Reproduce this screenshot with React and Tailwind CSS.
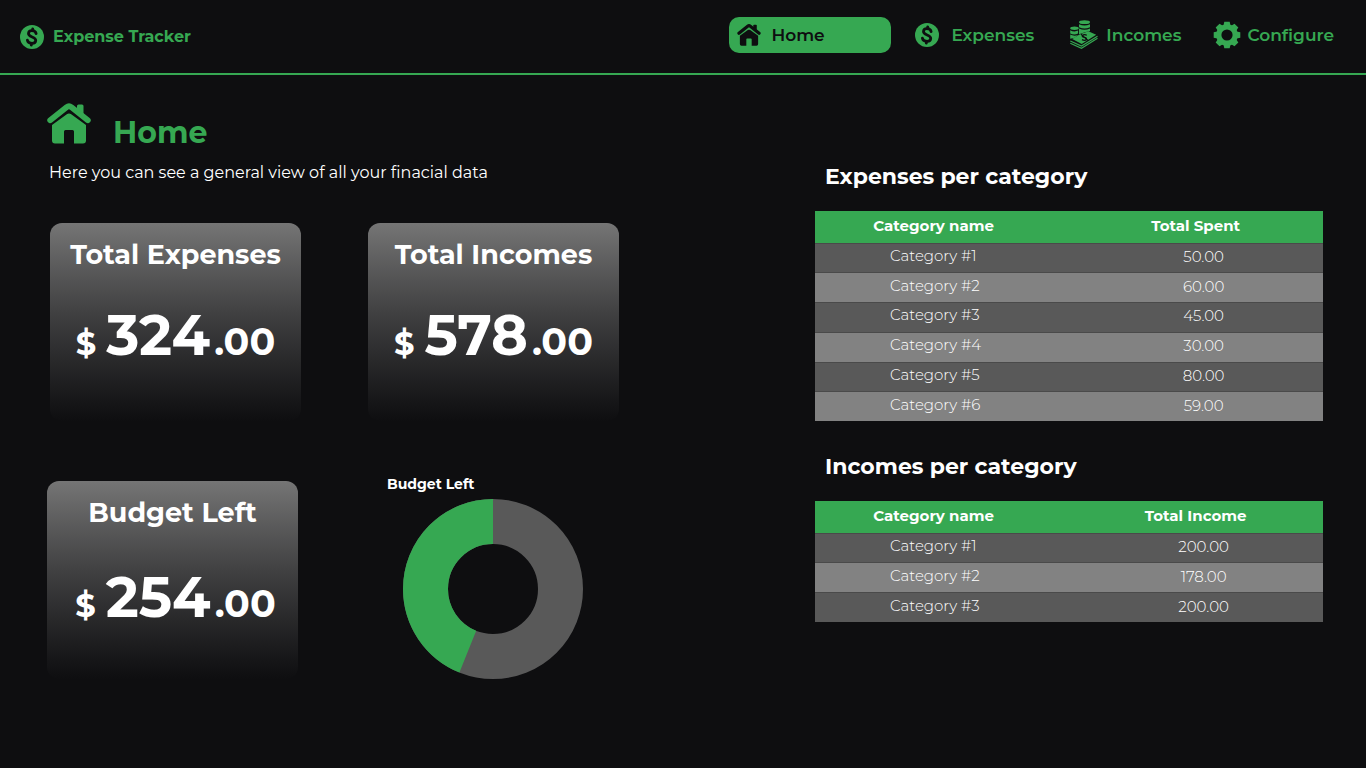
const GREEN = '#36a852';

function DollarIcon({ className }) {
  return (
    <svg viewBox="0 0 24 24" className={className} aria-hidden="true">
      <circle cx="12" cy="12" r="12" fill="currentColor" />
      <g transform="rotate(5 12 12)" fill="none" stroke="#0e0e10" strokeWidth="2.8" strokeLinecap="round" strokeLinejoin="round">
        <path d="M15.800 8.200C15.200 6.500 13.900 5.700 12 5.700c-2.200 0-3.800 1.200-3.800 3 0 4.300 7.800 2.200 7.800 6.500 0 2-1.700 3.100-4 3.100-2.200 0-3.800-1-4.300-2.700" />
        <path d="M12 3.800v1.900M12 18.300v1.900" />
      </g>
    </svg>
  );
}

function HomeIcon({ className }) {
  return (
    <svg viewBox="0 0 44 41" className={className} fill="currentColor" aria-hidden="true">
      <path d="M30 6.300V3Q30 1.500 31.500 1.500H35Q36.500 1.500 36.500 3v8z" />
      <path d="M3.200 17.300 19.500 4.200Q22 2.200 24.500 4.200L40.800 17.300" fill="none" stroke="currentColor" strokeWidth="5.800" strokeLinecap="round" strokeLinejoin="round" />
      <path d="M5 22 19.800 11.300Q22 9.700 24.200 11.300L39 22V37.500Q39 40.500 36 40.500H27V28.500Q27 27 25.500 27H18.500Q17 27 17 28.500V40.500H8Q5 40.500 5 37.500z" />
    </svg>
  );
}

function MoneyIcon({ className }) {
  return (
    <svg viewBox="0 0 28 29" className={className} fill="currentColor" aria-hidden="true">
      <ellipse cx="14.500" cy="2.200" rx="5.500" ry="1.900" />
      <path d="M9 4.200q5.500 2.600 11 0v3q-5.500 2.600-11 0zM9 8.500q5.500 2.600 11 0v2.600l-5 1.200-6 2z" />
      <ellipse cx="4.500" cy="8.200" rx="4.300" ry="1.700" />
      <path d="M.2 10.200q4 2.200 7.900.4v3q-4 1.800-7.900-.2zM.2 14.600q3.500 1.800 7.900.5l-3.400 2.700-4.500 1z" />
      <path d="M2.200 19 9 14.800 18.300 11.200l7.900 3.600L11.700 24z" />
      <path d="M.3 21 11.500 26 27.500 16.200M.3 23.200 11.500 28.300 27.500 18.200" fill="none" stroke="currentColor" strokeWidth="1.200" />
      <path d="M16.800 15.200q-2.600-1.400-4.300.2-.9 1.700 1.600 2 2.900.2 2.300 2.100-1.400 1.600-4.400.1M11 14.300l7 6.200" fill="none" stroke="#0e0e10" strokeWidth="1.200" />
    </svg>
  );
}

function GearIcon({ className }) {
  return (
    <svg viewBox="-14 -14 28 28" className={className} fill="none" aria-hidden="true">
      <circle r="8.200" stroke="currentColor" strokeWidth="5.200" />
      <g fill="currentColor">
        {[0, 45, 90, 135, 180, 225, 270, 315].map((angle) => (
          <path key={angle} transform={`rotate(${angle})`} d="M-3.500-9.500-2.700-13.300h5.400L3.500-9.500z" />
        ))}
      </g>
    </svg>
  );
}

const navItems = [
  { label: 'Expenses', Icon: DollarIcon, size: 'h-6 w-6', spacing: 'mr-1 gap-3' },
  { label: 'Incomes', Icon: MoneyIcon, size: 'h-[29px] w-7', spacing: 'gap-2' },
  { label: 'Configure', Icon: GearIcon, size: 'h-7 w-7', spacing: 'gap-1.5' },
];

function AmountCard({ title, whole, amountSpacing = 'mt-7' }) {
  return (
    <section className="h-[198px] w-[251px] shrink-0 rounded-xl bg-linear-to-b from-[#757575] via-[#414142] via-45% to-[#0e0e10] pt-3 text-center font-bold text-white">
      <h2 className="text-[27px] leading-10">{title}</h2>
      <p className={`flex items-baseline justify-center leading-[64px] ${amountSpacing}`}>
        <span className="mr-2.5 text-[32px]">$</span>
        <span className="text-[56px]">{whole}</span>
        <span className="ml-1 text-[38px]">.00</span>
      </p>
    </section>
  );
}

function CategoryTable({ title, valueLabel, rows, height }) {
  return (
    <section>
      <h2 className="pl-[10px] text-[22px] leading-[34px] font-bold">{title}</h2>
      <table className={`mt-[17px] w-full table-fixed border-collapse ${height}`}>
        <thead>
          <tr className="h-8 bg-[#36a852] text-[15px] leading-5">
            <th scope="col" className="w-[53%] p-0 pr-8 pb-0.5 font-bold">Category name</th>
            <th scope="col" className="p-0 pr-4 pb-0.5 font-bold">{valueLabel}</th>
          </tr>
        </thead>
        <tbody>
          {rows.map((value, i) => (
            <tr key={i} className="border-t border-[#4a4a4a] text-[15px] leading-5 font-light odd:bg-[#595959] even:bg-[#828282]">
              <td className="p-0 pb-1 pl-[75px]">Category #{i + 1}</td>
              <td className="p-0 pb-0.5 text-center">{value}</td>
            </tr>
          ))}
        </tbody>
      </table>
    </section>
  );
}

function BudgetChart() {
  const length = 2 * Math.PI * 67.5;
  return (
    <figure className="flex flex-col">
      <figcaption className="text-[14px] leading-5 font-bold">Budget Left</figcaption>
      <svg viewBox="0 0 180 180" className="mt-[5px] ml-4 h-[180px] w-[180px]" role="img" aria-label="Budget Left">
        <g fill="none" strokeWidth="45" transform="rotate(-90 90 90)">
          <circle cx="90" cy="90" r="67.5" stroke="#595959" />
          <circle cx="90" cy="90" r="67.5" stroke={GREEN} strokeDasharray={`${length * 0.44} ${length}`} strokeDashoffset={-length * 0.56} />
        </g>
      </svg>
    </figure>
  );
}

export default function App() {
  return (
    <div className="min-h-screen bg-[#0e0e10] font-['Montserrat','Inter',sans-serif] text-white">
      <header className="flex h-[75px] items-center justify-between border-b-2 border-[#36a852] pr-8 pl-5 text-[17px] leading-6 font-semibold text-[#36a852]">
        <a href="#" className="flex items-center gap-[9px] text-base font-bold">
          <DollarIcon className="h-6 w-6" />
          Expense Tracker
        </a>
        <nav className="flex items-center gap-8 pb-1">
          <a href="#home" aria-current="page" className="-mr-2 flex h-9 w-[162px] items-center gap-2.5 rounded-[10px] bg-[#36a852] pl-2 text-[#0e0e10]">
            <HomeIcon className="h-[22px] w-6" />
            Home
          </a>
          {navItems.map(({ label, Icon, size, spacing }) => (
            <a key={label} href={`#${label.toLowerCase()}`} className={`flex items-center ${spacing}`}>
              <Icon className={size} />
              {label}
            </a>
          ))}
        </nav>
      </header>

      <main className="flex items-start justify-between gap-8 pr-[43px] pl-[47px]">
        <div className="pt-7">
          <div className="flex items-end gap-[22px] text-[#36a852]">
            <HomeIcon className="h-[41px] w-11" />
            <h1 className="text-[30px] leading-[22px] font-bold">Home</h1>
          </div>
          <p className="mt-[17px] pl-0.5 text-base leading-6">Here you can see a general view of all your finacial data</p>
          <div className="mt-[38px] flex gap-[67px] pl-[3px]">
            <AmountCard title="Total Expenses" whole="324" />
            <AmountCard title="Total Incomes" whole="578" />
          </div>
          <div className="mt-[53px] flex items-end gap-[89px]">
            <AmountCard title="Budget Left" whole="254" amountSpacing="mt-8 pl-1.5" />
            <BudgetChart />
          </div>
        </div>

        <div className="flex w-[508px] flex-col gap-[29px] pt-[85px]">
          <CategoryTable
            title="Expenses per category"
            valueLabel="Total Spent"
            rows={['50.00', '60.00', '45.00', '30.00', '80.00', '59.00']}
            height="h-[210px]"
          />
          <CategoryTable
            title="Incomes per category"
            valueLabel="Total Income"
            rows={['200.00', '178.00', '200.00']}
            height="h-[121px]"
          />
        </div>
      </main>
    </div>
  );
}
